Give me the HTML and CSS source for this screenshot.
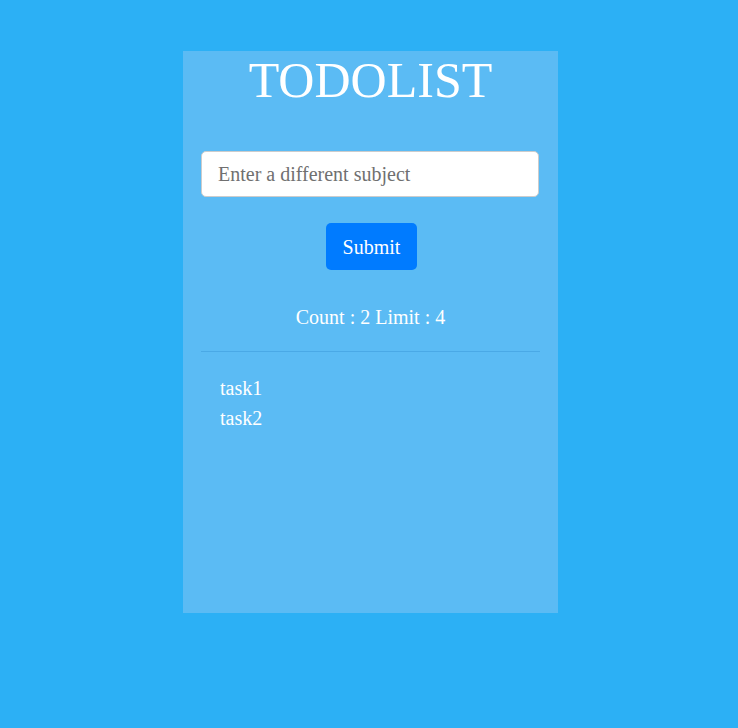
FILE: index.html
```html
<!DOCTYPE html>
<html>
<head>
<meta charset="utf-8">
<link rel="stylesheet" href="styles.css">
</head>
<body>
<div class="card">
  <h1 class="title">TODOLIST</h1>
  <input class="subject" type="text" placeholder="Enter a different subject">
  <div class="actions"><button class="submit">Submit</button></div>
  <p class="count">Count : 2 Limit : 4</p>
  <hr class="divider">
  <ul class="tasks">
    <li>task1</li>
    <li>task2</li>
  </ul>
</div>
</body>
</html>
```
FILE: styles.css
```css
html, body {
  margin: 0;
  padding: 0;
  background: #2cb0f5;
  font-family: "Liberation Serif", "Times New Roman", serif;
  color: #fff;
}
body {
  height: 728px;
}
.card {
  box-sizing: border-box;
  width: 375px;
  height: 562px;
  margin: 51px 0 0 183px;
  background: #5bbbf4;
  padding: 0 18px;
}
.title {
  margin: 0;
  text-align: center;
  font-weight: normal;
  font-size: 50px;
  line-height: 58px;
  padding-top: 0;
}
.subject {
  display: block;
  box-sizing: border-box;
  width: 338px;
  height: 46px;
  margin-top: 42px;
  border: 1px solid #ccc;
  border-radius: 5px;
  padding: 0 16px;
  font-family: inherit;
  font-size: 20px;
  color: #555;
  background: #fff;
  outline: none;
}
.subject::placeholder {
  color: #707070;
}
.actions {
  display: flex;
  justify-content: center;
  margin-top: 26px;
  padding-left: 2px;
}
.submit {
  box-sizing: border-box;
  width: 91px;
  height: 47px;
  border: none;
  border-radius: 5px;
  background: #007bff;
  color: #fff;
  font-family: inherit;
  font-size: 20px;
  padding: 2px 0 0;
}
.count {
  margin: 24px 0 0;
  text-align: center;
  font-size: 20px;
  line-height: 46px;
}
.divider {
  margin: 11px 0 0;
  border: none;
  border-top: 1px solid #4aa9e6;
  height: 0;
}
.tasks {
  list-style: none;
  margin: 21px 0 0;
  padding: 0 0 0 19px;
  font-size: 20px;
  line-height: 30px;
}
```
